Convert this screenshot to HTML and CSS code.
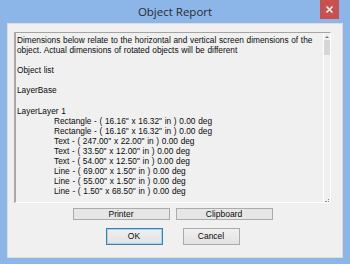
FILE: index.html
```html
<!DOCTYPE html>
<html>
<head>
<meta charset="utf-8">
<link rel="stylesheet" href="styles.css">
</head>
<body>
<div class="window">
  <div class="titlebar">
    <div class="title">Object Report</div>
    <div class="close"><svg width="9" height="9" viewBox="0 0 9 9"><path d="M1.5 1.5L7.5 7.5M7.5 1.5L1.5 7.5" stroke="#fff" stroke-width="1.6"/></svg></div>
  </div>
  <div class="client">
    <div class="textbox">
      <div class="content">
        <div class="line">Dimensions below relate to the horizontal and vertical screen dimensions of the</div>
        <div class="line">object. Actual dimensions of rotated objects will be different</div>
        <div class="line">&nbsp;</div>
        <div class="line">Object list</div>
        <div class="line">&nbsp;</div>
        <div class="line">LayerBase</div>
        <div class="line">&nbsp;</div>
        <div class="line">LayerLayer 1</div>
        <div class="line ind">Rectangle - ( 16.16" x 16.32" in ) 0.00 deg</div>
        <div class="line ind">Rectangle - ( 16.16" x 16.32" in ) 0.00 deg</div>
        <div class="line ind">Text - ( 247.00" x 22.00" in ) 0.00 deg</div>
        <div class="line ind">Text - ( 33.50" x 12.00" in ) 0.00 deg</div>
        <div class="line ind">Text - ( 54.00" x 12.50" in ) 0.00 deg</div>
        <div class="line ind">Line - ( 69.00" x 1.50" in ) 0.00 deg</div>
        <div class="line ind">Line - ( 55.00" x 1.50" in ) 0.00 deg</div>
        <div class="line ind">Line - ( 1.50" x 68.50" in ) 0.00 deg</div>
      </div>
      <div class="scrollbar">
        <div class="arrow"></div>
        <div class="thumb"></div>
        <div class="track"></div>
        <div class="grip"></div>
      </div>
    </div>
    <div class="row row1">
      <button class="btn small">Printer</button>
      <button class="btn small">Clipboard</button>
    </div>
    <div class="row row2">
      <button class="btn big default">OK</button>
      <button class="btn big">Cancel</button>
    </div>
  </div>
</div>
</body>
</html>
```
FILE: styles.css
```css
html, body {
  margin: 0;
  padding: 0;
}
body {
  width: 350px;
  height: 264px;
  overflow: hidden;
  background: #8cb5e8;
}
.window {
  width: 350px;
  height: 264px;
  display: flex;
  flex-direction: column;
  background: #8cb5e8;
}
.titlebar {
  height: 23px;
  display: flex;
  justify-content: center;
  position: relative;
}
.title {
  font-family: "Open Sans", "Noto Sans", sans-serif;
  font-size: 11.5px;
  line-height: 24px;
  color: #2b2b2b;
}
.close {
  position: absolute;
  left: 320px;
  top: 0;
  width: 19px;
  height: 19px;
  background: #c8504f;
  display: flex;
  align-items: center;
  justify-content: center;
}
.client {
  margin: 0 7px;
  height: 235px;
  background: #f0f0f0;
  border: 1px solid #d8dde6;
  box-sizing: border-box;
  display: flex;
  flex-direction: column;
  padding: 8px 11px 0 6px;
}
.textbox {
  height: 171px;
  border-top: 1px solid #a4a4a4;
  border-left: 2px solid #a8a8a8;
  border-bottom: 1px solid #ffffff;
  border-right: 1px solid #ffffff;
  box-sizing: border-box;
  display: flex;
  background: #f0f0f0;
}
.content {
  flex: 1;
  padding: 2px 0 0 1px;
  font-family: "Liberation Sans", Arial, sans-serif;
  font-size: 8.3px;
  word-spacing: 0.4px;
  line-height: 10.1px;
  color: #0a0a0a;
  white-space: nowrap;
  overflow: hidden;
}
.line.ind {
  padding-left: 37px;
}
.scrollbar {
  width: 6px;
  border-left: 1px solid #ffffff;
  display: flex;
  flex-direction: column;
  align-items: center;
}
.arrow {
  margin-top: 3px;
  width: 0;
  height: 0;
  border-left: 2px solid transparent;
  border-right: 2px solid transparent;
  border-bottom: 2px solid #777;
}
.thumb {
  margin-top: 2px;
  width: 6px;
  height: 15px;
  background: #d6d6d6;
}
.track {
  flex: 1;
}
.grip {
  width: 4px;
  height: 3px;
  border-right: 1px dotted #888;
  border-bottom: 1px dotted #888;
  box-sizing: border-box;
}
.row {
  display: flex;
  justify-content: center;
}
.row1 {
  margin-top: 5px;
  gap: 6px;
}
.row2 {
  margin-top: 8px;
  gap: 20px;
}
.btn {
  margin: 0;
  padding: 0;
  font-family: "Liberation Sans", Arial, sans-serif;
  font-size: 8.5px;
  color: #0a0a0a;
  background: #ececec;
  border: 1px solid #ababab;
  box-sizing: border-box;
}
.btn.small {
  width: 97px;
  height: 12px;
  line-height: 10px;
  background: #e6e6e6;
}
.btn.big {
  width: 57px;
  height: 17px;
  line-height: 15px;
  background: linear-gradient(#f0f0f0, #e2e2e2);
}
.btn.default {
  border: 1px solid #3c7fb1;
  box-shadow: inset 0 0 0 1px #a6d0ee;
}
```
